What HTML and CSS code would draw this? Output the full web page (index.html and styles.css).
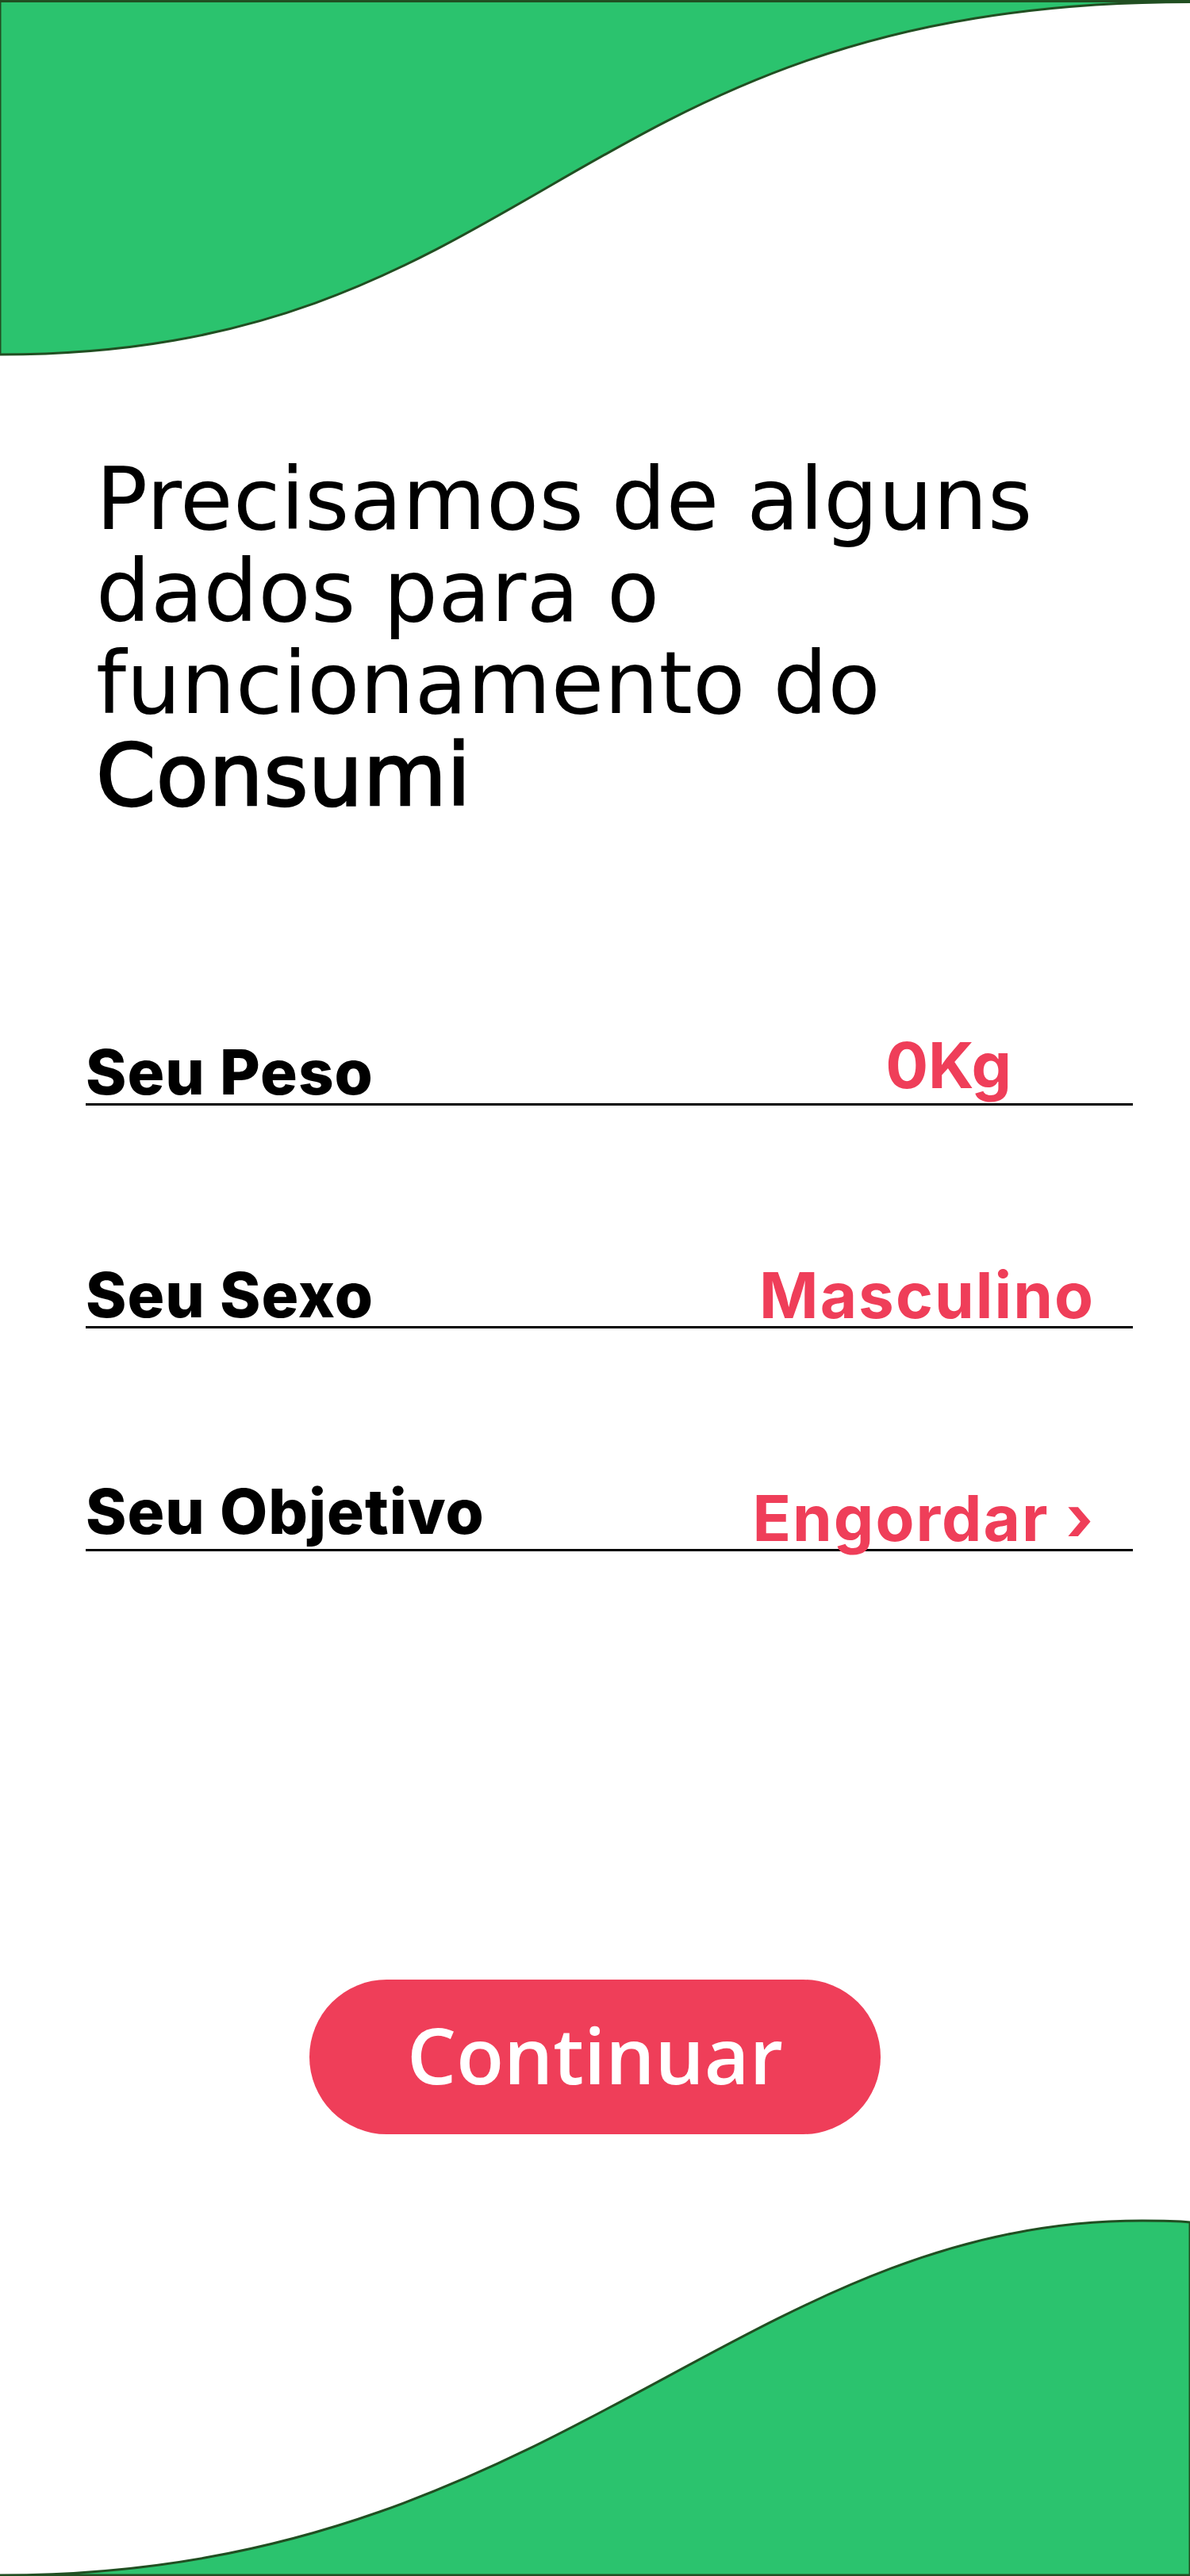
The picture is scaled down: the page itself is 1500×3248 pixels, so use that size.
FILE: index.html
```html
<!DOCTYPE html>
<html lang="pt-BR">
<head>
<meta charset="utf-8">
<title>Consumi - Dados</title>
<link rel="stylesheet" href="styles.css">
</head>
<body>
<main class="screen">
  <svg class="wave wave-top" viewBox="0 0 1500 452" width="1500" height="452" aria-hidden="true">
    <path d="M0 1.5 H1500 V2.5 C716 2.5 677 447 0 447 Z" fill="#2BC36E" stroke="#214F22" stroke-width="3"/>
  </svg>

  <h1 class="title">Precisamos de alguns<br>dados para o<br>funcionamento do<br><span class="brand">Consumi</span></h1>

  <section class="fields">
    <div class="field">
      <span class="label">Seu Peso</span>
      <span class="value value-weight">0Kg</span>
    </div>
    <div class="field">
      <span class="label">Seu Sexo</span>
      <span class="value">Masculino</span>
    </div>
    <div class="field">
      <span class="label label-raised">Seu Objetivo</span>
      <span class="value">Engordar ›</span>
    </div>
  </section>

  <button class="continue" type="button">Continuar</button>

  <svg class="wave wave-bottom" viewBox="0 0 1500 450" width="1500" height="450" aria-hidden="true">
    <path d="M0 449 C700 449 930 2 1440 2 C1470 2 1490 3 1500 4 V449 Z" fill="#2BC36E" stroke="#214F22" stroke-width="3"/>
  </svg>
</main>
</body>
</html>
```

FILE: styles.css
```css
html, body {
  margin: 0;
  padding: 0;
  background: #ffffff;
}

.screen {
  width: 1500px;
  height: 3248px;
  display: flex;
  flex-direction: column;
  overflow: hidden;
  background: #ffffff;
}

.wave {
  display: block;
  flex: none;
}

.title {
  margin: 120px 0 0 121px;
  font-family: "DejaVu Sans", "Liberation Sans", sans-serif;
  font-weight: 400;
  font-size: 108px;
  line-height: 116px;
  color: #000000;
  letter-spacing: 0.4px;
}

.brand {
  font-weight: 400;
  -webkit-text-stroke: 2.5px #000000;
}

.fields {
  margin: 277px 0 0 108px;
  width: 1320px;
  display: flex;
  flex-direction: column;
  gap: 200px;
}

.field {
  display: flex;
  align-items: flex-end;
  justify-content: space-between;
  border-bottom: 3px solid #000000;
  height: 78px;
}

.label {
  font-family: "Inter", "Liberation Sans", sans-serif;
  font-weight: 800;
  font-size: 78px;
  line-height: 78px;
  color: #000000;
  letter-spacing: 1px;
}

.label-raised {
  padding-bottom: 8px;
}

.value {
  font-family: "Inter", "Liberation Sans", sans-serif;
  font-weight: 700;
  font-size: 80px;
  line-height: 78px;
  color: #EF3E59;
  padding-right: 48px;
  letter-spacing: 2px;
}

.value-weight {
  padding-right: 153px;
  padding-bottom: 9px;
  letter-spacing: 0;
}

.continue {
  margin: 540px auto 0;
  width: 720px;
  height: 195px;
  border: none;
  border-radius: 98px;
  background: #EF3E59;
  color: #ffffff;
  font-family: "Open Sans", "Noto Sans", sans-serif;
  font-weight: 600;
  font-size: 98px;
  line-height: 1;
  padding: 0 0 8px;
  cursor: pointer;
}

.wave-bottom {
  margin-top: auto;
}
```
